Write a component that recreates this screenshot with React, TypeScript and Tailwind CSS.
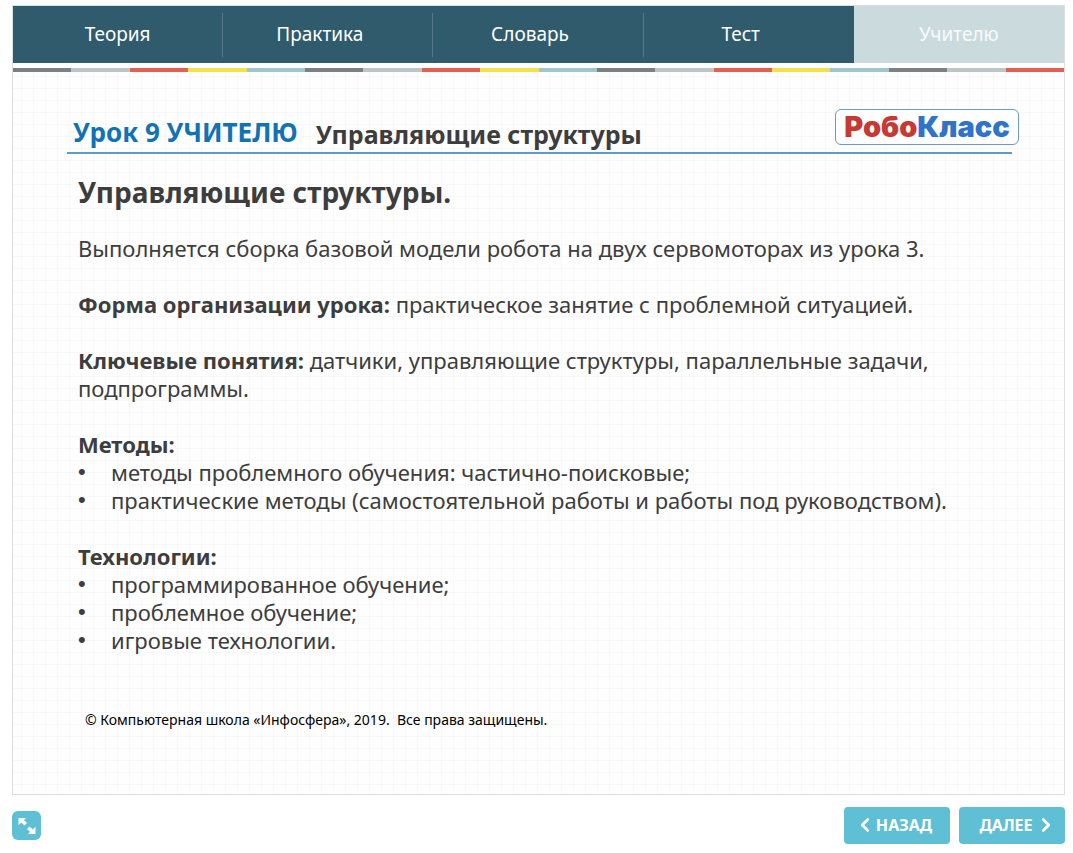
import { ChevronLeft, ChevronRight } from "lucide-react";

const tabs = ["Теория", "Практика", "Словарь", "Тест"];

const stripeColors = ["bg-[#7b8083]", "bg-[#bcc6c9]", "bg-[#e3604f]", "bg-[#f3e14c]", "bg-[#9fc5ce]"];

const methods = [
  "методы проблемного обучения: частично-поисковые;",
  "практические методы (самостоятельной работы и работы под руководством).",
];

const technologies = ["программированное обучение;", "проблемное обучение;", "игровые технологии."];

const BulletList = ({ items }: { items: string[] }) => (
  <ul>
    {items.map((item) => (
      <li key={item} className="flex">
        <span className="w-[33px] shrink-0 font-['Liberation_Sans',sans-serif]">•</span>
        {item}
      </li>
    ))}
  </ul>
);

const Tabs = () => (
  <nav className="flex h-[57px] bg-[#2f5b6c] text-[19px] text-white">
    {tabs.map((tab, i) => (
      <div key={tab} className="flex flex-1 items-center">
        <button className={i === 0 ? "h-full flex-1" : "h-full flex-1 pr-4"}>{tab}</button>
        {i < 3 && <span className="h-11 w-px bg-[#56798a]" />}
      </div>
    ))}
    <button aria-current="page" className="flex-1 bg-[#cbdadd] text-[#f8fbfb]">
      Учителю
    </button>
  </nav>
);

const Stripe = () => (
  <div className="flex h-[9px] bg-white pt-[5px]">
    {Array.from({ length: 18 }, (_, i) => (
      <span key={i} className={`flex-1 ${stripeColors[i % 5]}`} />
    ))}
  </div>
);

const Logo = () => (
  <div className="flex h-9 w-[184px] items-center justify-center rounded-md border border-[#6b9cc9] bg-white font-['Inter',sans-serif] text-[29px] font-black">
    <span className="text-[#c63a35]">Робо</span>
    <span className="text-[#2f74c8]">Класс</span>
  </div>
);

export default function App() {
  return (
    <div className="bg-white px-3 pt-[5px] pr-2 font-['Noto_Sans','Open_Sans',sans-serif] text-[#3d3d3d]">
      <div className="border border-[#dcdfe0]">
        <Tabs />
        <Stripe />
        <main className="bg-[#fefefe] bg-[linear-gradient(to_right,#f8f8f8_1px,transparent_1px),linear-gradient(to_bottom,#f8f8f8_1px,transparent_1px)] bg-[size:12px_12px] bg-[position:8px_4px] pb-16">
          <header className="mr-[52px] ml-[54px] flex items-end border-b-2 border-[#5b9dc4] pt-[37px] pb-0.5">
            <h2 className="ml-1.5 text-[26px] leading-9 font-bold text-[#1272b6]">Урок 9 УЧИТЕЛЮ</h2>
            <p className="ml-[18px] flex-1 text-[25px] leading-8 font-bold">Управляющие структуры</p>
            <div className="-mr-[7px] mb-[5px]">
              <Logo />
            </div>
          </header>

          <article className="mr-16 ml-[65px] pt-5 text-[22px] leading-7">
            <h1 className="mb-6 text-[28px] leading-9 font-bold">Управляющие структуры.</h1>
            <p className="mb-7">Выполняется сборка базовой модели робота на двух сервомоторах из урока 3.</p>
            <p className="mb-7">
              <strong>Форма организации урока:</strong> практическое занятие с проблемной ситуацией.
            </p>
            <p className="mb-7">
              <strong>Ключевые понятия:</strong> датчики, управляющие структуры, параллельные задачи, подпрограммы.
            </p>
            <h3 className="font-bold">Методы:</h3>
            <BulletList items={methods} />
            <h3 className="mt-7 font-bold">Технологии:</h3>
            <BulletList items={technologies} />
          </article>

          <p className="mt-14 ml-[72px] text-sm leading-5 whitespace-pre text-black">
            © Компьютерная школа «Инфосфера», 2019.{"  "}Все права защищены.
          </p>
        </main>
      </div>

      <footer className="flex items-center pt-3 pb-2">
        <button
          aria-label="Во весь экран"
          className="flex size-[29px] items-center justify-center rounded-md bg-[#5fbfd4] text-white"
        >
          <svg viewBox="0 0 18 18" className="size-[18px]" fill="currentColor">
            <path d="M0.5 1H8L6 3.2L9 6L6.5 8.5L3.3 5.6L0.5 8.3zM17.5 17H10L12 14.8L9 12L11.5 9.5L14.7 12.4L17.5 9.7z" />
          </svg>
        </button>
        <button className="ml-auto flex h-[37px] w-[106px] items-center justify-center rounded bg-[#5fbfd4] pr-1 pb-0.5 text-base font-bold text-white">
          <ChevronLeft size={22} strokeWidth={3} />
          <span className="mr-1">НАЗАД</span>
        </button>
        <button className="ml-[9px] flex h-[37px] w-[106px] items-center justify-center rounded bg-[#5fbfd4] pb-0.5 pl-1 text-base font-bold text-white">
          <span className="mr-0.5 ml-2">ДАЛЕЕ</span>
          <ChevronRight size={22} strokeWidth={3} />
        </button>
      </footer>
    </div>
  );
}
